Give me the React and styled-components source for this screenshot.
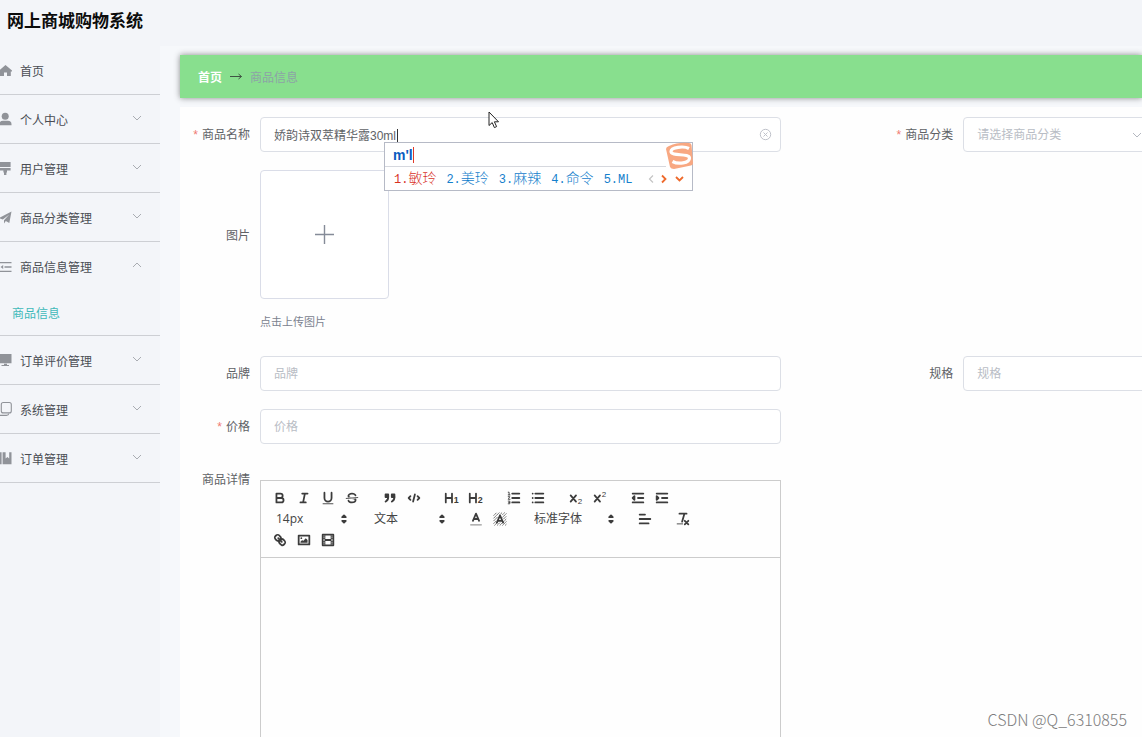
import React from 'react';
import styled, { createGlobalStyle } from 'styled-components';

const GlobalStyle = createGlobalStyle`
  *, *::before, *::after { box-sizing: border-box; }
  html, body { margin: 0; }
  body {
    font-family: "Liberation Sans", "Noto Sans CJK SC", sans-serif;
    font-size: 12px;
    color: #606266;
    background: #f3f5f9;
  }
  button, input, select, textarea { font: inherit; color: inherit; }
`;

const Page = styled.div`
  display: flex;
  flex-direction: column;
  height: 100vh;
  overflow: hidden;
  position: relative;
`;

const Header = styled.header`
  flex: none;
  height: 46px;
  padding: 0 7px;
  display: flex;
  align-items: center;
`;

const Title = styled.h1`
  margin: 0;
  font-size: 17px;
  line-height: 24px;
  padding-bottom: 2px;
  font-weight: 700;
  color: #0c0c0c;
`;

const Body = styled.div`
  flex: 1;
  min-height: 0;
  display: flex;
`;

const Sidebar = styled.nav`
  flex: none;
  width: 160px;
`;

const Menu = styled.ul`
  list-style: none;
  margin: 0;
  padding: 0;
`;

const MenuGroup = styled.li`
  border-bottom: 1px solid #cdcfd4;
`;

const MenuItem = styled.a`
  display: flex;
  align-items: center;
  gap: 8px;
  height: 48px;
  padding-right: 16px;
  color: #4a4d54;
  text-decoration: none;
`;

const MenuLabel = styled.span`
  flex: 1;
`;

const MenuIcon = styled.svg`
  width: 12px;
  height: 18px;
  color: #909399;
`;

const Chevron = styled.svg`
  width: 14px;
  height: 8px;
  margin-bottom: 2px;
  fill: none;
  stroke: #a9acb2;
`;

const SubItem = styled.a`
  display: block;
  height: 45px;
  padding-left: 12px;
  line-height: 48px;
  color: #3fb9b9;
  text-decoration: none;
`;

const Main = styled.main`
  flex: 1;
  min-width: 0;
  padding: 9px 0 0 20px;
  background: #f6f8fb;
  display: flex;
  flex-direction: column;
  overflow: hidden;
`;

const Breadcrumb = styled.div`
  flex: none;
  display: flex;
  align-items: center;
  gap: 7px;
  height: 43px;
  padding: 0 18px 1px;
  margin-bottom: 9px;
  background: #88df8e;
  box-shadow: 0 0 6px rgba(0, 0, 0, 0.45);
`;

const HomeLink = styled.a`
  color: #fff;
  font-weight: 700;
  text-decoration: none;
`;

const Arrow = styled.svg`
  width: 14px;
  height: 9px;
  fill: none;
  stroke: #3f5443;
`;

const Current = styled.span`
  color: #8da3a6;
`;

const Form = styled.form`
  flex: 1;
  min-height: 0;
  padding-top: 10px;
  background: #fefefe;
  display: flex;
  flex-direction: column;
  gap: 18px;
`;

const Row = styled.div`
  flex: none;
  display: flex;
`;

const Field = styled.div`
  flex: 0 0 73.1%;
  display: flex;
  padding-right: 102px;
`;

const Label = styled.label`
  flex: none;
  width: 80px;
  height: ${(p) => (p.$tall ? 129 : 35)}px;
  padding-right: 10px;
  text-align: right;
  line-height: ${(p) => (p.$tall ? 132 : 37)}px;

  &::before {
    content: ${(p) => (p.$required ? '"*"' : 'none')};
    margin-right: 4px;
    color: #f07a72;
  }
`;

const Control = styled.div`
  flex: 1;
  min-width: 0;
  position: relative;
  display: flex;
  align-items: center;
`;

const Input = styled.input`
  width: 100%;
  height: 35px;
  padding: 0 13px;
  border: 1px solid #dcdfe6;
  border-radius: 4px;
  background: #fff;
  outline: none;
  &::placeholder { color: #b9bdc5; opacity: 1; }
`;

const ClearButton = styled.button`
  flex: none;
  width: 13px;
  height: 13px;
  margin-left: -22px;
  margin-right: 9px;
  padding: 0;
  border: 0;
  background: none;
  svg { display: block; fill: none; stroke: #bfc2ca; }
`;

const TextCaret = styled.span`
  position: absolute;
  left: 137px;
  top: 12px;
  width: 1px;
  height: 14px;
  background: #333;
`;

const SelectBox = styled.select`
  appearance: none;
  width: 190px;
  height: 35px;
  padding: 0 13px;
  border: 1px solid #dcdfe6;
  border-radius: 4px;
  background: #fff;
  color: #b9bdc5;
`;

const SelectArrow = styled.svg`
  width: 12px;
  height: 8px;
  margin-left: -22px;
  fill: none;
  stroke: #b4b8c0;
  pointer-events: none;
`;

const Upload = styled.div`
  display: flex;
  flex-direction: column;
`;

const UploadBox = styled.button`
  width: 129px;
  height: 129px;
  border: 1px solid #dadde8;
  border-radius: 4px;
  background: #fff;
  display: flex;
  align-items: center;
  justify-content: center;
  svg { stroke: #858b98; }
`;

const Tip = styled.span`
  margin: 14px 0 7px;
  font-size: 11px;
  line-height: 18px;
  color: #7b828f;
`;

const Ime = styled.div`
  position: absolute;
  z-index: 2;
  left: 124px;
  top: 25px;
  width: 309px;
  height: 49px;
  border: 1px solid #b6bac6;
  background: #fff;
`;

const ImeTyping = styled.div`
  display: flex;
  align-items: center;
  height: 24px;
  margin-right: 26px;
  padding-left: 8px;
  border-bottom: 1px solid #d6d8de;
  font-size: 14px;
  font-weight: 700;
  color: #0a5cbf;
`;

const ImeCaret = styled.span`
  width: 1px;
  height: 16px;
  background: #e03a2a;
`;

const Candidates = styled.div`
  display: flex;
  align-items: center;
  height: 23px;
  padding-left: 9px;
  font-size: 14px;
`;

const Candidate = styled.span`
  margin-right: 10px;
  font-weight: 300;
  color: ${(p) => (p.$first ? '#d8321f' : '#1580cc')};
  white-space: nowrap;
  line-height: 20px;
`;

const Mono = styled.span`
  font-family: "Liberation Mono", monospace;
  font-size: 12px;
`;

const ImePager = styled.svg`
  margin-left: 6px;
  fill: none;
`;

const ImeLogo = styled.svg`
  position: absolute;
  right: -1px;
  top: -1px;
`;

const Editor = styled.div`
  flex: 1;
  min-width: 0;
  margin-top: 18px;
  border: 1px solid #ccc;
  display: flex;
  flex-direction: column;
`;

const Toolbar = styled.div`
  display: flex;
  flex-wrap: wrap;
  padding: 6px 7px 7px;
  border-bottom: 1px solid #ccc;
`;

const ToolGroup = styled.div`
  display: flex;
  margin-right: ${(p) => (p.$picker ? 13 : 14)}px;
`;

const Tool = styled.button`
  width: 24px;
  height: 21px;
  padding: 0;
  border: 0;
  background: none;
  display: flex;
  align-items: center;
  justify-content: center;
`;

const Glyph = styled.svg`
  width: 16px;
  height: 16px;
  fill: none;
  stroke: #3c3c3c;
  stroke-width: 2;
  stroke-linecap: round;
  stroke-linejoin: round;
  .f { fill: #3c3c3c; }
  .s { fill: #3c3c3c; stroke: none; }
  .t { stroke-width: 1; }
  text {
    fill: #3c3c3c;
    stroke: none;
    font: 700 10px "Liberation Sans", sans-serif;
  }
  .small { font-weight: 400; font-size: 9px; }
`;

const Picker = styled.div`
  display: flex;
  align-items: center;
  width: ${(p) => (p.$wide ? 94 : 85)}px;
  height: 21px;
  svg { flex: none; margin-left: -17px; pointer-events: none; }
`;

const PickerSelect = styled.select`
  appearance: none;
  width: 100%;
  height: 21px;
  padding: 0 8px;
  border: 0;
  background: none;
  color: #444;
  font-family: "Open Sans", "Noto Sans CJK SC", sans-serif;
`;

const EditorArea = styled.textarea`
  flex: 1;
  min-height: 180px;
  padding: 12px 15px;
  border: 0;
  outline: none;
  resize: none;
  background: transparent;
`;

const DetailRow = styled(Row)`
  flex: 1;
`;

const Watermark = styled.div`
  position: absolute;
  right: 15px;
  bottom: 8px;
  font-family: "Noto Sans CJK SC", sans-serif;
  font-size: 16px;
  font-weight: 300;
  line-height: 20px;
  color: #7d7d7d;
`;

const Pointer = styled.svg`
  position: absolute;
  z-index: 3;
  left: 228px;
  top: -6px;
`;

const menuIcons = {
  home: <path fill="currentColor" d="M5.5 4 L12 9.6 V10.5 H10.8 V15 H7 V11.5 H4 V15 H0 V8.7 Z" />,
  user: (
    <g fill="currentColor">
      <circle cx="5.2" cy="6.2" r="3.5" />
      <path d="M0 15.3 V12 Q1 10.8 3 10.8 H8 Q11.5 10.8 11.5 14.3 V15.3 Z" />
    </g>
  ),
  brush: <path fill="currentColor" d="M0 3 H10.6 V8 H0 Z M0 9 H10.6 V11.6 H7 V13.4 H6.4 V16 H4 V13.4 H3.4 V11.6 H0 Z" />,
  plane: <path fill="currentColor" d="M11.5 3.6 L9.3 15 L5.8 13 L4 15.6 V12.2 L9.3 6.4 L2.8 11.6 L0 10.4 V9.4 Z" />,
  fold: (
    <g stroke="currentColor" fill="currentColor" strokeWidth="1.3">
      <path d="M0 5.7 H11.5 M4.5 10 H11.5 M0 14.3 H11.5" />
      <path stroke="none" d="M0.5 10 L3.2 8 V12 Z" />
    </g>
  ),
  monitor: <path fill="currentColor" d="M0 3 H11.5 V12.2 H0 Z M4 12.8 H7 V14 H9 V15 H1.5 V14 H4 Z" />,
  copy: (
    <g fill="none" stroke="currentColor" strokeWidth="1.1">
      <rect x="1.3" y="2.5" width="10" height="10.4" rx="2" />
      <path d="M0 15.4 H6.5 Q8.6 15.4 8.8 13.5" />
    </g>
  ),
  book: <path fill="currentColor" d="M0 3.3 H1.6 V15.3 H0 Z M2.6 3.3 H5.6 V9.5 L7.4 8 L9.2 9.5 V3.3 H11.5 V15.3 H2.6 Z" />,
};

const menu = [
  { icon: 'home', label: '首页', leaf: true },
  { icon: 'user', label: '个人中心' },
  { icon: 'brush', label: '用户管理' },
  { icon: 'plane', label: '商品分类管理' },
  { icon: 'fold', label: '商品信息管理', children: ['商品信息'] },
  { icon: 'monitor', label: '订单评价管理' },
  { icon: 'copy', label: '系统管理' },
  { icon: 'book', label: '订单管理' },
];

const glyphs = {
  加粗: <path d="M5,4H9.5A2.5,2.5,0,0,1,9.5,9H5V4Z M5,9h5.5A2.5,2.5,0,0,1,10.5,14H5V9Z" />,
  斜体: <path d="M7,4H13 M5,14H11 M8,14L10,4" />,
  下划线: (
    <>
      <path d="M5,3V9a4,4,0,0,0,8,0V3" />
      <rect className="s" x="3" y="15" width="12" height="1" />
    </>
  ),
  删除线: (
    <>
      <path className="t" d="M15.5,8.5L2.5,9.5" />
      <path className="s" d="M9.007,8C6.542,7.791,6,7.519,6,6.5,6,5.792,7.283,5,9,5c1.571,0,2.765.679,2.969,1.309a1,1,0,0,0,1.9-.617C13.356,4.106,11.354,3,9,3,6.2,3,4,4.538,4,6.5a3.2,3.2,0,0,0,.5,1.843Z" />
      <path className="s" d="M8.984,10C11.457,10.208,12,10.479,12,11.5c0,.708-1.283,1.5-3,1.5-1.571,0-2.765-.679-2.969-1.309a1,1,0,1,0-1.9.617C4.644,13.894,6.646,15,9,15c2.8,0,5-1.538,5-3.5a3.2,3.2,0,0,0-.5-1.843Z" />
    </>
  ),
  引用: (
    <>
      <rect className="f" x="4" y="5" width="3" height="3" />
      <rect className="f" x="11" y="5" width="3" height="3" />
      <path className="f" d="M7,8c0,4.031-3,5-3,5 M14,8c0,4.031-3,5-3,5" />
    </>
  ),
  代码: <path d="M5,7L3,9L5,11 M13,7L15,9L13,11 M10,5L8,13" />,
  一级标题: (
    <>
      <path d="M2,4V14 M9,4V14 M2,9H9" />
      <text x="11" y="15">1</text>
    </>
  ),
  二级标题: (
    <>
      <path d="M2,4V14 M9,4V14 M2,9H9" />
      <text x="11" y="15">2</text>
    </>
  ),
  有序列表: (
    <>
      <path d="M7,4H15 M7,9H15 M7,14H15" />
      <path className="t" d="M2.5,2.5H3.5V5.5 M2.5,5.5H4.5 M2.5,7.5H4.3L2.5,10.5H4.5 M2.5,12.5H4.3V15.5H2.5 M3,14H4.3" />
    </>
  ),
  无序列表: <path d="M6,4H15 M6,9H15 M6,14H15 M3,4H3.01 M3,9H3.01 M3,14H3.01" />,
  下标: (
    <>
      <path d="M3,6L9,13 M9,6L3,13" />
      <text className="small" x="11" y="16">2</text>
    </>
  ),
  上标: (
    <>
      <path d="M3,6L9,13 M9,6L3,13" />
      <text className="small" x="11" y="8">2</text>
    </>
  ),
  减少缩进: (
    <>
      <path d="M3,14H15 M3,4H15 M9,9H15" />
      <path className="f" d="M5,7V11L3,9Z" />
    </>
  ),
  增加缩进: (
    <>
      <path d="M3,14H15 M3,4H15 M9,9H15" />
      <path className="f" d="M3,7V11L5,9Z" />
    </>
  ),
  文字颜色: (
    <>
      <path d="M5.5,11L9,3L12.5,11 M11.6,9H6.4" />
      <path stroke="#999" d="M3,15.5H15" strokeWidth="1.4" />
    </>
  ),
  背景颜色: (
    <>
      <path
        stroke="#555"
        strokeWidth="0.9"
        strokeDasharray="1.4 1"
        d="M2,5L5,2 M2,8L8,2 M2,11L6,7 M2,14L5,11 M9,4L11,2 M3,16L6,13 M6,16L9,13 M12,4L14,2 M12,7L16,3 M9,16L12,13 M13,9L16,6 M13,12L16,9 M12,16L16,12 M15,16L16,15"
      />
      <path d="M5.5,13L9,5L12.5,13 M11.6,11H6.4" />
    </>
  ),
  对齐: <path d="M3,4H9 M3,9H15 M3,14H13" />,
  清除格式: (
    <>
      <path d="M5,3H13 M8,12L10.5,3.5" />
      <path d="M11,11L15,15 M15,11L11,15" />
      <rect className="s" x="2" y="14" width="7" height="1" />
    </>
  ),
  链接: (
    <>
      <path d="M7,7L11,11" />
      <path d="M8.9,4.577a3.476,3.476,0,0,1,.36,4.679A3.476,3.476,0,0,1,4.577,8.9C3.185,7.5,2.035,6.4,4.217,4.217S7.5,3.185,8.9,4.577Z" />
      <path d="M13.423,9.1a3.476,3.476,0,0,0-4.679-.36,3.476,3.476,0,0,0,.36,4.679c1.392,1.392,2.5,2.542,4.679.36S14.815,10.5,13.423,9.1Z" />
    </>
  ),
  图片: (
    <>
      <rect x="3" y="4" width="12" height="10" />
      <circle className="s" cx="6" cy="7" r="1" />
      <path className="s" d="M5,12V11L7,9L8,10L11,7L13,9V12Z" />
    </>
  ),
  视频: (
    <>
      <rect x="3" y="3" width="12" height="12" />
      <path className="s" d="M5,3H6V15H5Z M12,3H13V15H12Z M5,8H13V10H5Z M3,5H6V6H3Z M3,7H6V8H3Z M3,10H6V11H3Z M3,12H6V13H3Z M12,5H15V6H12Z M12,7H15V8H12Z M12,10H15V11H12Z M12,12H15V13H12Z" />
    </>
  ),
};

function Tools({ names }) {
  return (
    <ToolGroup>
      {names.map((name) => (
        <Tool key={name} type="button" aria-label={name}>
          <Glyph viewBox="0 0 18 18" overflow="visible">{glyphs[name]}</Glyph>
        </Tool>
      ))}
    </ToolGroup>
  );
}

function ToolPicker({ label, value, wide }) {
  return (
    <ToolGroup $picker>
      <Picker $wide={wide}>
        <PickerSelect aria-label={label} defaultValue={value}>
          <option>{value}</option>
        </PickerSelect>
        <Glyph viewBox="0 0 18 18">
          <path className="f" d="M7,11L9,13L11,11Z M7,7L9,5L11,7Z" />
        </Glyph>
      </Picker>
    </ToolGroup>
  );
}

function TextField({ id, label, required }) {
  return (
    <Field>
      <Label htmlFor={id} $required={required}>{label}</Label>
      <Control>
        <Input id={id} placeholder={label} />
      </Control>
    </Field>
  );
}

const candidates = ['敏玲', '美玲', '麻辣', '命令'];

function ImeWindow() {
  return (
    <Ime>
      <ImeTyping>
        m'l
        <ImeCaret />
      </ImeTyping>
      <Candidates>
        {candidates.map((word, i) => (
          <Candidate key={word} $first={i === 0}>
            <Mono>{i + 1}.</Mono>
            {word}
          </Candidate>
        ))}
        <Candidate>
          <Mono>5.ML</Mono>
        </Candidate>
        <ImePager width="40" height="10" viewBox="0 0 40 10" strokeWidth="1.8">
          <path stroke="#c4c4c4" strokeWidth="1.2" d="M5,1.5L1.5,5L5,8.5" />
          <path stroke="#ee6a2c" d="M14,1.5L17.5,5L14,8.5" />
          <path stroke="#ee6a2c" d="M28,3L31.5,6.5L35,3" />
        </ImePager>
      </Candidates>
      <ImeLogo width="28" height="28" viewBox="0 0 28 28">
        <path fill="#f8a882" d="M4,4 Q13,0 24,1 Q26,1 26.5,3 L28,21 Q28,23 26,23.5 L9,27 Q6,27 5,25 L1,7 Q1,5 4,4Z" />
        <path
          fill="none"
          stroke="#fff"
          strokeWidth="3.2"
          d="M24,6.5 C19,3.8 6,5 6,9.5 C6,14.5 24.5,11 24.5,16 C24.5,21.5 13,22.5 7.5,19.5"
        />
      </ImeLogo>
    </Ime>
  );
}

export default function App() {
  return (
    <Page>
      <GlobalStyle />
      <Header>
        <Title>网上商城购物系统</Title>
      </Header>
      <Body>
        <Sidebar>
          <Menu>
            {menu.map(({ icon, label, leaf, children }) => (
              <MenuGroup key={label}>
                <MenuItem href="#">
                  <MenuIcon viewBox="0 0 12 18">{menuIcons[icon]}</MenuIcon>
                  <MenuLabel>{label}</MenuLabel>
                  {!leaf && (
                    <Chevron viewBox="0 0 14 8">
                      <path d={children ? 'M3,6L7,2L11,6' : 'M3,2L7,6L11,2'} />
                    </Chevron>
                  )}
                </MenuItem>
                {children?.map((child) => (
                  <SubItem key={child} href="#">{child}</SubItem>
                ))}
              </MenuGroup>
            ))}
          </Menu>
        </Sidebar>
        <Main>
          <Breadcrumb>
            <HomeLink href="#">首页</HomeLink>
            <Arrow viewBox="0 0 14 9">
              <path d="M1,4.5H12.5 M9.5,2L12.5,4.5L9.5,7" />
            </Arrow>
            <Current>商品信息</Current>
          </Breadcrumb>
          <Form>
            <Row>
              <Field>
                <Label htmlFor="name" $required>商品名称</Label>
                <Control>
                  <Input id="name" defaultValue="娇韵诗双萃精华露30ml" />
                  <TextCaret />
                  <ClearButton type="button" aria-label="清空">
                    <svg width="13" height="13" viewBox="0 0 13 13">
                      <circle cx="6.5" cy="6.5" r="5.2" />
                      <path d="M4.5,4.5L8.5,8.5 M8.5,4.5L4.5,8.5" />
                    </svg>
                  </ClearButton>
                  <ImeWindow />
                  <Pointer width="12" height="20" viewBox="0 0 12 20">
                    <path
                      fill="#fff"
                      stroke="#222"
                      d="M1,1V14.5L4.2,11.6L6.4,16.6L8.6,15.6L6.4,10.8H10.5Z"
                    />
                  </Pointer>
                </Control>
              </Field>
              <Field>
                <Label htmlFor="category" $required>商品分类</Label>
                <Control>
                  <SelectBox id="category" defaultValue="">
                    <option value="">请选择商品分类</option>
                  </SelectBox>
                  <SelectArrow viewBox="0 0 12 8">
                    <path d="M2,2L6,6L10,2" />
                  </SelectArrow>
                </Control>
              </Field>
            </Row>
            <Row>
              <Field>
                <Label htmlFor="picture" $tall>图片</Label>
                <Upload>
                  <UploadBox id="picture" type="button" aria-label="图片">
                    <svg width="21" height="21" viewBox="0 0 21 21">
                      <path strokeWidth="1.4" d="M10.5,1V20 M1,10.5H20" />
                    </svg>
                  </UploadBox>
                  <Tip>点击上传图片</Tip>
                </Upload>
              </Field>
            </Row>
            <Row>
              <TextField id="brand" label="品牌" />
              <TextField id="spec" label="规格" />
            </Row>
            <Row>
              <TextField id="price" label="价格" required />
            </Row>
            <DetailRow>
              <Field>
                <Label htmlFor="detail">商品详情</Label>
                <Editor>
                  <Toolbar>
                    <Tools names={['加粗', '斜体', '下划线', '删除线']} />
                    <Tools names={['引用', '代码']} />
                    <Tools names={['一级标题', '二级标题']} />
                    <Tools names={['有序列表', '无序列表']} />
                    <Tools names={['下标', '上标']} />
                    <Tools names={['减少缩进', '增加缩进']} />
                    <ToolPicker label="字号" value="14px" />
                    <ToolPicker label="段落" value="文本" />
                    <Tools names={['文字颜色', '背景颜色']} />
                    <ToolPicker label="字体" value="标准字体" wide />
                    <Tools names={['对齐']} />
                    <Tools names={['清除格式']} />
                    <Tools names={['链接', '图片', '视频']} />
                  </Toolbar>
                  <EditorArea id="detail" />
                </Editor>
              </Field>
            </DetailRow>
          </Form>
        </Main>
      </Body>
      <Watermark>CSDN @Q_6310855</Watermark>
    </Page>
  );
}
